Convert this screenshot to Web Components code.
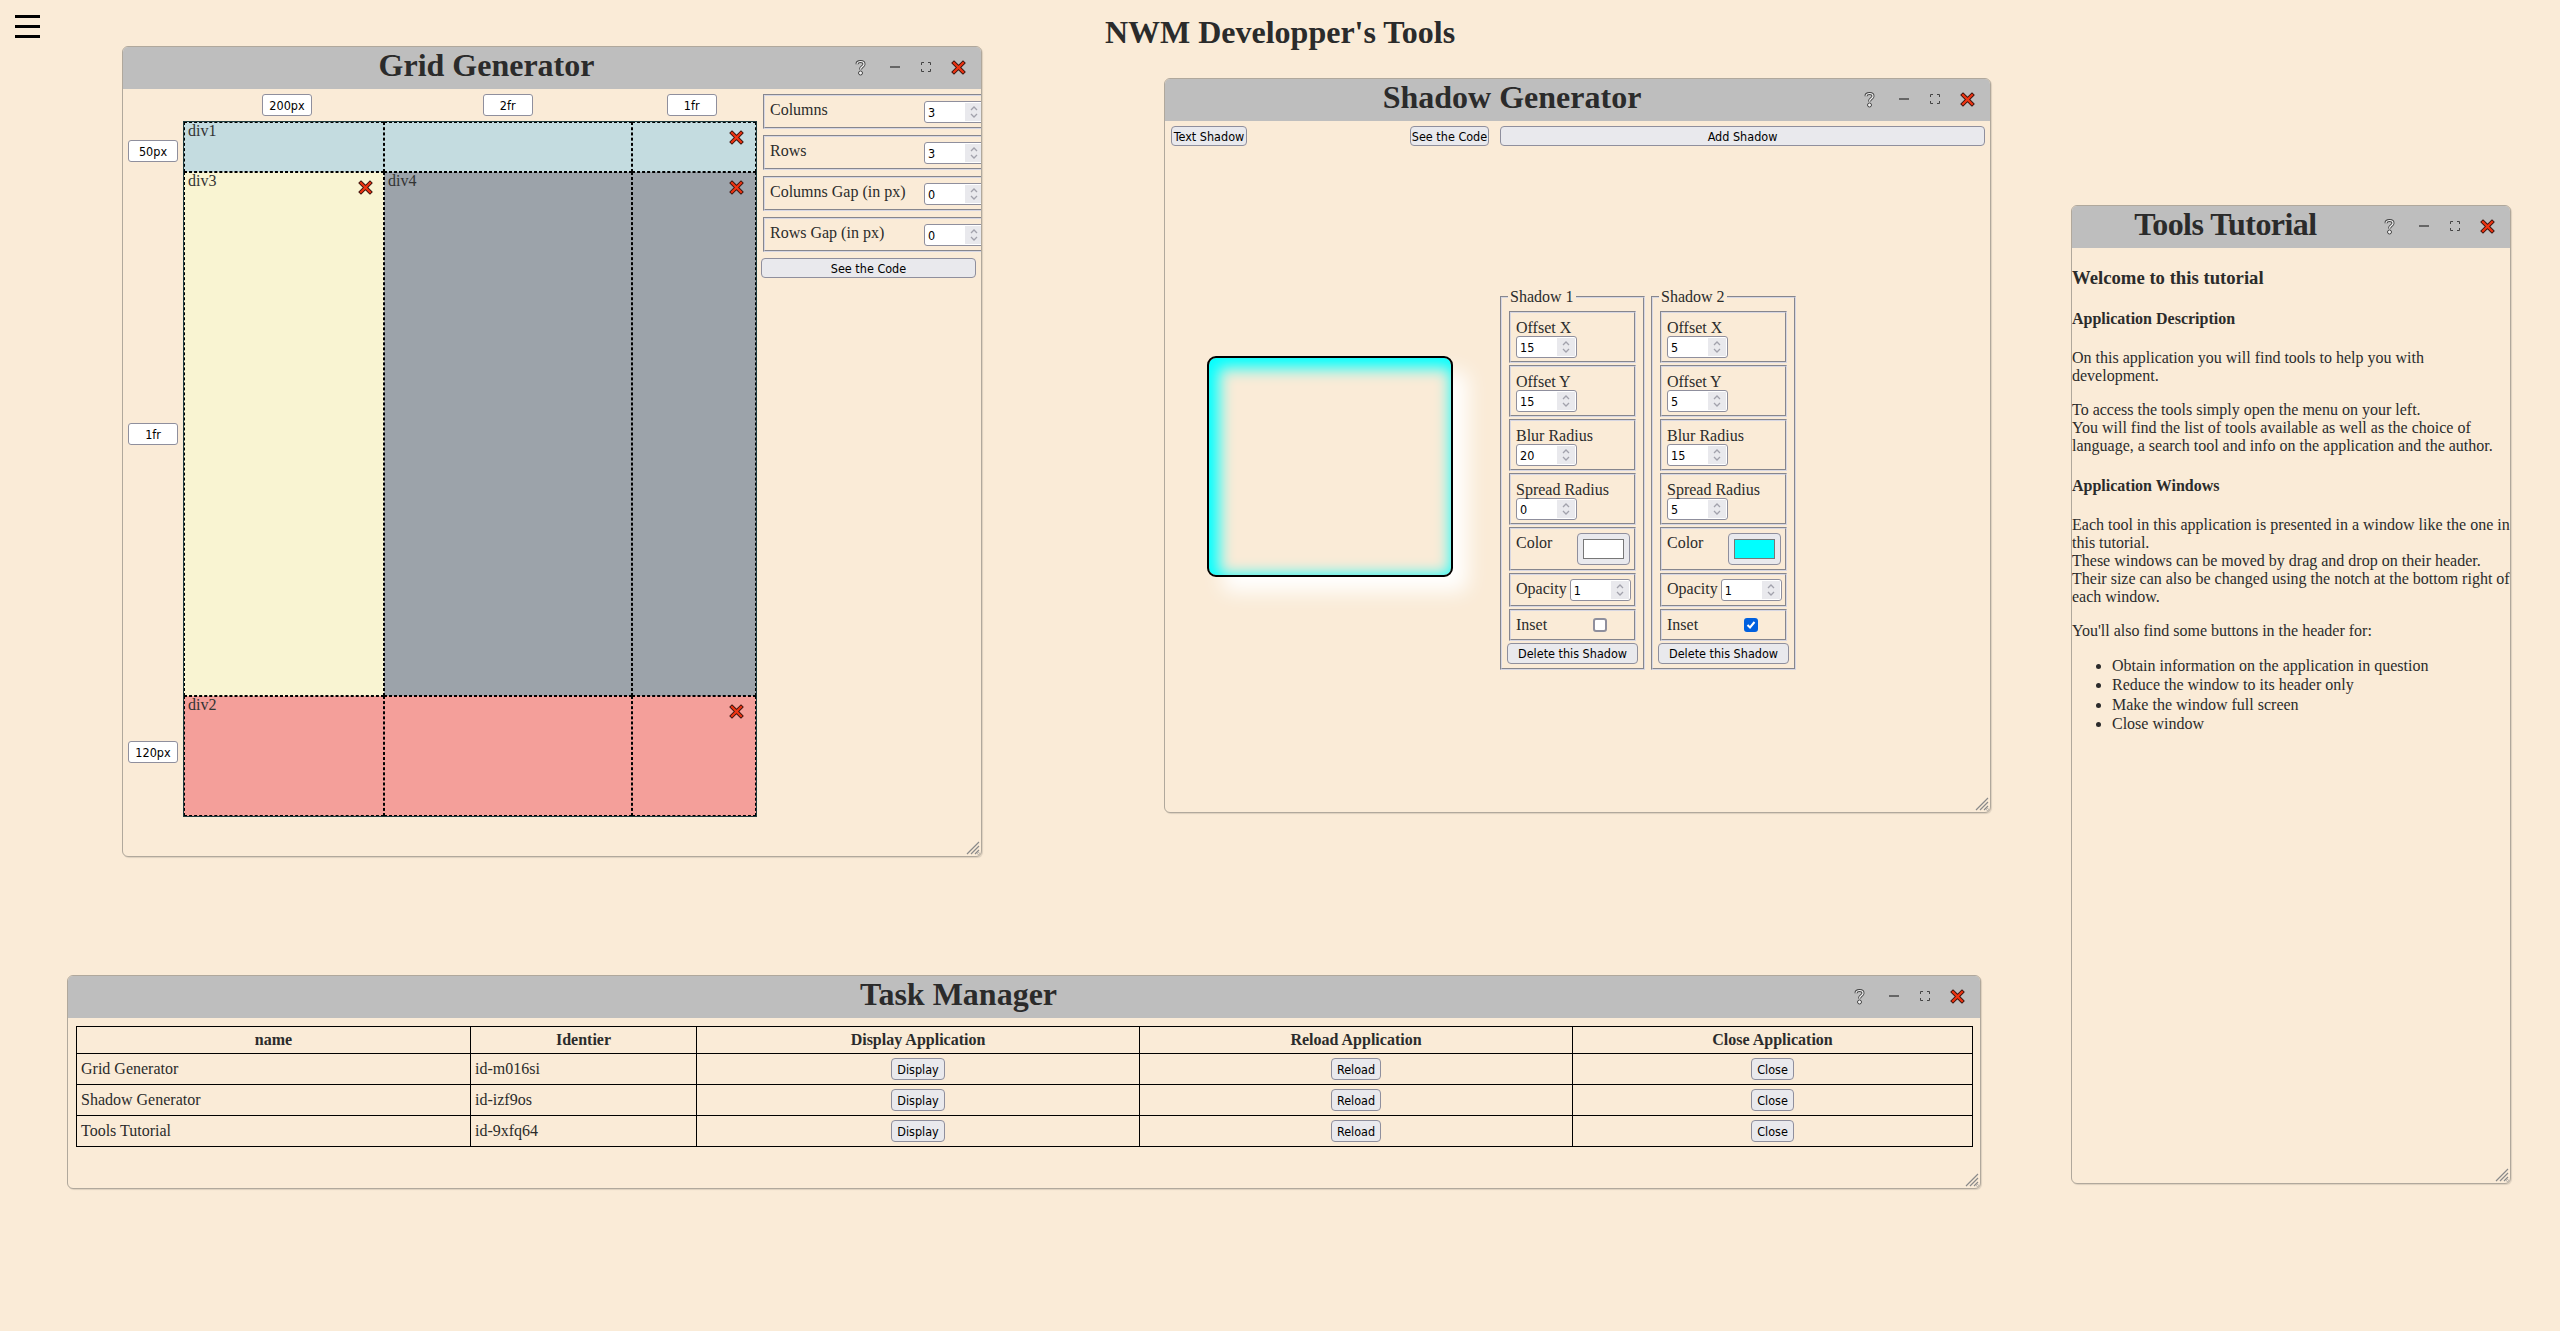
<!DOCTYPE html>
<html lang="en"><head><meta charset="utf-8"><title>NWM Developper's Tools</title>
<style>
html,body{margin:0;height:100%}
body{background:#faebd7;color:#2b2b2b;font-family:"Liberation Serif",serif;font-size:16px;overflow:hidden;position:relative;text-rendering:optimizeLegibility;font-kerning:normal}
</style></head><body>
<nwm-burger></nwm-burger>
<nwm-title>NWM Developper's Tools</nwm-title>

<nwm-window heading="Grid Generator" style="left:122px;top:46px;width:860px;height:811px"><nwm-grid-tool></nwm-grid-tool></nwm-window>
<nwm-window heading="Shadow Generator" style="left:1164px;top:78px;width:827px;height:735px"><nwm-shadow-tool></nwm-shadow-tool></nwm-window>
<nwm-window heading="Tools Tutorial" tight style="left:2071px;top:205px;width:440px;height:979px"><nwm-tutorial></nwm-tutorial></nwm-window>
<nwm-window heading="Task Manager" style="left:67px;top:975px;width:1914px;height:214px"><nwm-tasks></nwm-tasks></nwm-window>

<script>
const XICON=`<svg width="15" height="15" viewBox="0 0 15 15" style="display:block"><path d="M3 3L12 12M12 3L3 12" stroke="#3a1510" stroke-width="4" stroke-linecap="square" fill="none"/><path d="M3 3L12 12M12 3L3 12" stroke="#ee3412" stroke-width="2.2" stroke-linecap="square" fill="none"/></svg>`;
const UI=`font:12.5px "DejaVu Sans Condensed","DejaVu Sans",sans-serif;font-stretch:condensed;color:#000`;
const BTNCSS=`.btn{display:inline-flex;align-items:center;justify-content:center;box-sizing:border-box;height:22px;padding:0 5px;background:#e9e9ed;border:1px solid #8f8f9d;border-radius:4px;${UI};white-space:nowrap}`;
const GROOVE=`border:2px groove #d6d6e2`;
function def(name,html,extra){
  customElements.define(name,class extends HTMLElement{
    constructor(){super();this.attachShadow({mode:'open'});}
    connectedCallback(){
      this.shadowRoot.innerHTML=typeof html==='function'?html(this):html;
      if(extra)extra(this);
    }
  });
}
def('nwm-burger',`<style>:host{position:absolute;left:15px;top:15px;display:flex;flex-direction:column;gap:7px;width:25px}i{display:block;height:3px;background:#000}</style><i></i><i></i><i></i>`);
def('nwm-title',`<style>:host{display:block;text-align:center;font-weight:bold;font-size:32px;line-height:37px;padding-top:14px}</style><slot></slot>`);
def('nwm-x',`<style>:host{display:block;width:15px;height:15px}</style>${XICON}`);
def('nwm-window',h=>`<style>
:host{position:absolute;display:flex;flex-direction:column;box-sizing:border-box;border:1px solid #b0a89c;border-radius:6px;overflow:hidden;background:#faebd7;box-shadow:1px 1px 1px rgba(0,0,0,.12)}
header{flex:none;height:42px;background:#bebebe;display:flex;align-items:center}
h2{flex:1;margin:0 -10px 0 0;padding-bottom:5px;text-align:center;font-size:32px;line-height:37px;font-weight:bold;color:#2b2b2b;white-space:nowrap}
:host([tight]) h2{letter-spacing:-.55px}
.ic{display:flex;align-items:center;padding:0 6px 2px 0;height:100%;box-sizing:border-box}
.ic span{display:flex;justify-content:center;align-items:center}
.body{flex:1;min-height:0;position:relative;overflow:hidden}
.rz{position:absolute;right:1px;bottom:1px;display:block}
</style>
<header><h2>${h.getAttribute('heading')}</h2><div class="ic">
<span style="width:40px"><svg width="13" height="17" viewBox="0 0 13 17"><path d="M3 5.2C3 1.6 10 1.6 10 5.2C10 7.6 6.5 7.4 6.5 10.4" fill="none" stroke="#444" stroke-width="3"/><path d="M3 5.2C3 1.6 10 1.6 10 5.2C10 7.6 6.5 7.4 6.5 10.4" fill="none" stroke="#f4f4f4" stroke-width="1.2"/><circle cx="6.5" cy="14" r="2" fill="#f4f4f4" stroke="#444"/></svg></span>
<span style="width:30px"><svg width="10" height="4" viewBox="0 0 10 4"><rect x="0" y="1" width="10" height="2" fill="#666"/></svg></span>
<span style="width:32px"><svg width="10" height="10" viewBox="0 0 10 10"><path d="M.5 3V.5H3M7 .5H9.5V3M9.5 7V9.5H7M3 9.5H.5V7" fill="none" stroke="#444"/></svg></span>
<span style="width:33px">${XICON}</span></div></header>
<div class="body"><slot></slot>
<svg class="rz" width="14" height="14" viewBox="0 0 14 14"><path d="M13 1L1 13M13 5L5 13M13 9L9 13" stroke="#8a8a8a" stroke-width="1.2" fill="none"/><circle cx="12.5" cy="12.5" r="1" fill="none" stroke="#999" stroke-width=".6"/></svg></div>`);

def('nwm-text',h=>`<style>:host{display:inline-block}div{box-sizing:border-box;width:50px;height:22px;display:flex;align-items:center;justify-content:center;background:#fff;border:1px solid #8f8f9d;border-radius:3px;${UI}}</style><div><slot></slot></div>`);
def('nwm-btn',`<style>:host{display:inline-block}${BTNCSS}.btn{width:100%;height:var(--bh,22px);padding:var(--bp,0 5px)}</style><div class="btn"><slot></slot></div>`);
def('nwm-num',h=>`<style>:host{display:block;flex:none}
.i{box-sizing:border-box;width:61px;height:22px;display:flex;align-items:center;justify-content:space-between;background:#fff;border:1px solid #8f8f9d;border-radius:3px;padding:1px 1px 1px 3px;${UI}}
.s{width:18px;height:100%;background:#e9e9ed;display:flex;align-items:center;justify-content:center}</style>
<div class="i"><span>${h.getAttribute('value')}</span><span class="s"><svg width="10" height="16" viewBox="0 0 10 16"><path d="M2 6L5 3L8 6M2 10L5 13L8 10" fill="none" stroke="#a2a2ac" stroke-width="1.3"/></svg></span></div>`);
def('nwm-color',h=>`<style>:host{display:block;flex:none}
.c{box-sizing:border-box;width:53px;height:32px;background:#e9e9ed;border:1px solid #8f8f9d;border-radius:4px;padding:5px 5px}
.s{box-sizing:border-box;height:20px;border:1px solid #777;background:${h.getAttribute('value')}}</style><div class="c"><div class="s"></div></div>`);
def('nwm-check',h=>`<style>:host{display:block;flex:none;margin:2px 23px 0 auto}
.k{box-sizing:border-box;width:14px;height:14px;border-radius:3px;background:#fff;border:2px solid #8f8f9d}
.on{background:#0060df;border-color:#0060df}svg{display:block}</style>
<div class="k ${h.hasAttribute('checked')?'on':''}">${h.hasAttribute('checked')?'<svg width="10" height="10" viewBox="0 0 10 10"><path d="M1.5 5L4 7.5L8.5 2" fill="none" stroke="#fff" stroke-width="2"/></svg>':''}</div>`);
def('nwm-field',h=>`<style>:host{display:block;box-sizing:border-box;${GROOVE};padding:5px 4px 0 5px;overflow:hidden}
:host([row]){display:flex;align-items:flex-start;gap:3px}</style><slot></slot>`);

def('nwm-grid-cell',h=>`<style>:host{display:block;position:relative;min-width:0;min-height:0;background:${h.getAttribute('bg')};grid-column:${h.getAttribute('col')};grid-row:${h.getAttribute('row')}}
.t{padding-left:4px;line-height:16px;color:#333;padding-top:1px}
.x{position:absolute;top:8px;right:${h.getAttribute('xr')||12}px}</style><div class="t"><slot></slot></div><nwm-x class="x"></nwm-x>`);

def('nwm-grid-tool',`<style>
:host{display:grid;grid-template-columns:60px 574px 1fr;grid-template-rows:32px 696px;height:100%}
.cols{grid-column:2;display:grid;grid-template-columns:200px 2fr 1fr;justify-items:center;padding-top:5px;box-sizing:border-box}
.rows{grid-column:1;grid-row:2;display:grid;grid-template-rows:50px 525px 120px}
.rows nwm-text{margin-left:5px}
.rows :nth-child(1){margin-top:19px}.rows :nth-child(2){margin-top:252px}.rows :nth-child(3){margin-top:45px}
.g{grid-column:2;grid-row:2;position:relative;box-sizing:border-box;border:1px solid #1d3b3f;display:grid;grid-template-columns:200px 2fr 1fr;grid-template-rows:50px 1fr 120px}
.ov{position:absolute;inset:0;display:grid;grid-template-columns:200px 2fr 1fr;grid-template-rows:50px 1fr 120px;pointer-events:none}
.ov i{border:1px dashed #000}
.side{grid-column:3;grid-row:1/3;margin:5px 0 0 6px;display:flex;flex-direction:column;gap:6px;width:228px}
nwm-field{height:35px;display:flex;justify-content:flex-start}
nwm-field span{flex:1;line-height:18px}
nwm-btn{width:215px;margin-left:-2px;--bh:20px;margin-top:0}
</style>
<div class="cols"><nwm-text style="margin-left:8px">200px</nwm-text><nwm-text>2fr</nwm-text><nwm-text style="margin-right:6px">1fr</nwm-text></div>
<div class="rows"><nwm-text>50px</nwm-text><nwm-text>1fr</nwm-text><nwm-text>120px</nwm-text></div>
<div class="g">
<nwm-grid-cell bg="#c4dce0" col="1/4" row="1">div1</nwm-grid-cell>
<nwm-grid-cell bg="#f9f4d2" col="1" row="2" xr="11">div3</nwm-grid-cell>
<nwm-grid-cell bg="#9ca3aa" col="2/4" row="2">div4</nwm-grid-cell>
<nwm-grid-cell bg="#f49f9a" col="1/4" row="3">div2</nwm-grid-cell>
<div class="ov"><i></i><i></i><i></i><i></i><i></i><i></i><i></i><i></i><i></i></div>
</div>
<div class="side">
<nwm-field row><span>Columns</span><nwm-num value="3"></nwm-num></nwm-field>
<nwm-field row><span>Rows</span><nwm-num value="3"></nwm-num></nwm-field>
<nwm-field row><span>Columns Gap (in px)</span><nwm-num value="0"></nwm-num></nwm-field>
<nwm-field row><span>Rows Gap (in px)</span><nwm-num value="0"></nwm-num></nwm-field>
<nwm-btn>See the Code</nwm-btn>
</div>`);

def('nwm-shadow-set',h=>{
 const v=h.getAttribute('vals').split(',');
 const chk=h.hasAttribute('inset')?'checked':'';
 return `<style>
:host{display:block}
fieldset{box-sizing:border-box;width:145px;min-width:0;height:382px;margin:0;${GROOVE};padding:5px 7px 0;display:block}
legend{padding:0 2px;margin-left:-1px;line-height:18px}
nwm-field{width:127px;margin-bottom:2px}
.st{height:52px;padding-top:6px;line-height:18px}
.st span{display:block;margin-bottom:-1px}
span{line-height:18px}
nwm-btn{width:131px;margin-left:-2px;--bh:21px;--bp:0}
.col{height:44px;display:flex}.col span{flex:1}.col nwm-color{margin-top:-1px}
.op{height:34px;display:flex}.in{height:32px;display:flex}
.op span{margin-right:3px}
.op nwm-num{margin-top:-1px}
</style><fieldset><legend>${h.getAttribute('heading')}</legend>
<nwm-field class="st"><span>Offset X</span><nwm-num value="${v[0]}"></nwm-num></nwm-field>
<nwm-field class="st"><span>Offset Y</span><nwm-num value="${v[1]}"></nwm-num></nwm-field>
<nwm-field class="st"><span>Blur Radius</span><nwm-num value="${v[2]}"></nwm-num></nwm-field>
<nwm-field class="st"><span>Spread Radius</span><nwm-num value="${v[3]}"></nwm-num></nwm-field>
<nwm-field class="col"><span>Color</span><nwm-color value="${v[4]}"></nwm-color></nwm-field>
<nwm-field class="op"><span>Opacity</span><nwm-num value="1"></nwm-num></nwm-field>
<nwm-field class="in"><span>Inset</span><nwm-check ${chk}></nwm-check></nwm-field>
<nwm-btn>Delete this Shadow</nwm-btn></fieldset>`;});

def('nwm-shadow-tool',`<style>
:host{display:block}
.bar{display:flex;padding:5px 5px 0 6px;height:20px;--bh:20px;--bp:0}
.main{display:flex;align-items:flex-start;margin-top:142px;padding-left:42px}
.pv{box-sizing:border-box;width:246px;height:221px;margin:68px 47px 0 0;border:2px solid #000;border-radius:9px;box-shadow:15px 15px 20px 0 #fff,inset 5px 5px 15px 5px #0ff}
nwm-shadow-set+nwm-shadow-set{margin-left:6px}
</style>
<div class="bar"><nwm-btn style="width:76px">Text Shadow</nwm-btn><nwm-btn style="width:79px;margin-left:163px">See the Code</nwm-btn><nwm-btn style="flex:1;margin-left:11px">Add Shadow</nwm-btn></div>
<div class="main"><div class="pv"></div>
<nwm-shadow-set heading="Shadow 1" vals="15,15,20,0,#ffffff"></nwm-shadow-set>
<nwm-shadow-set heading="Shadow 2" vals="5,5,15,5,#00ffff" inset></nwm-shadow-set></div>`);

def('nwm-tutorial',`<style>
:host{display:block;line-height:18px;white-space:nowrap}
h3{font-size:18.72px;line-height:21px;margin:19px 0 22px}
h4{font-size:16px;line-height:18px;margin:22px 0 21px}
p{margin:16px 0;line-height:18px}
ul{margin:16px 0 0;padding-left:40px;line-height:19.3px}
</style>
<h3>Welcome to this tutorial</h3>
<h4>Application Description</h4>
<p>On this application you will find tools to help you with<br>development.</p>
<p>To access the tools simply open the menu on your left.<br>You will find the list of tools available as well as the choice of<br>language, a search tool and info on the application and the author.</p>
<h4>Application Windows</h4>
<p>Each tool in this application is presented in a window like the one in<br>this tutorial.<br>These windows can be moved by drag and drop on their header.<br>Their size can also be changed using the notch at the bottom right of<br>each window.</p>
<p>You'll also find some buttons in the header for:</p>
<ul><li>Obtain information on the application in question</li><li>Reduce the window to its header only</li><li>Make the window full screen</li><li>Close window</li></ul>`);

def('nwm-tasks',()=>{
 const rows=[['Grid Generator','id-m016si'],['Shadow Generator','id-izf9os'],['Tools Tutorial','id-9xfq64']];
 return `<style>
:host{display:block;padding:8px 8px 0}
table{border-collapse:collapse;table-layout:fixed;width:1896px}
th,td{border:1px solid #000;padding:0 4px;line-height:18px}
th{height:26px;color:#2b2b2b}td{height:30px}
.c{text-align:center}
nwm-btn{vertical-align:middle}
</style><table><colgroup><col style="width:394px"><col style="width:226px"><col style="width:443px"><col style="width:433px"><col style="width:400px"></colgroup>
<tr><th>name</th><th>Identier</th><th>Display Application</th><th>Reload Application</th><th>Close Application</th></tr>
${rows.map(r=>`<tr><td>${r[0]}</td><td>${r[1]}</td><td class="c"><nwm-btn>Display</nwm-btn></td><td class="c"><nwm-btn>Reload</nwm-btn></td><td class="c"><nwm-btn>Close</nwm-btn></td></tr>`).join('')}
</table>`;});
</script>
</body></html>
